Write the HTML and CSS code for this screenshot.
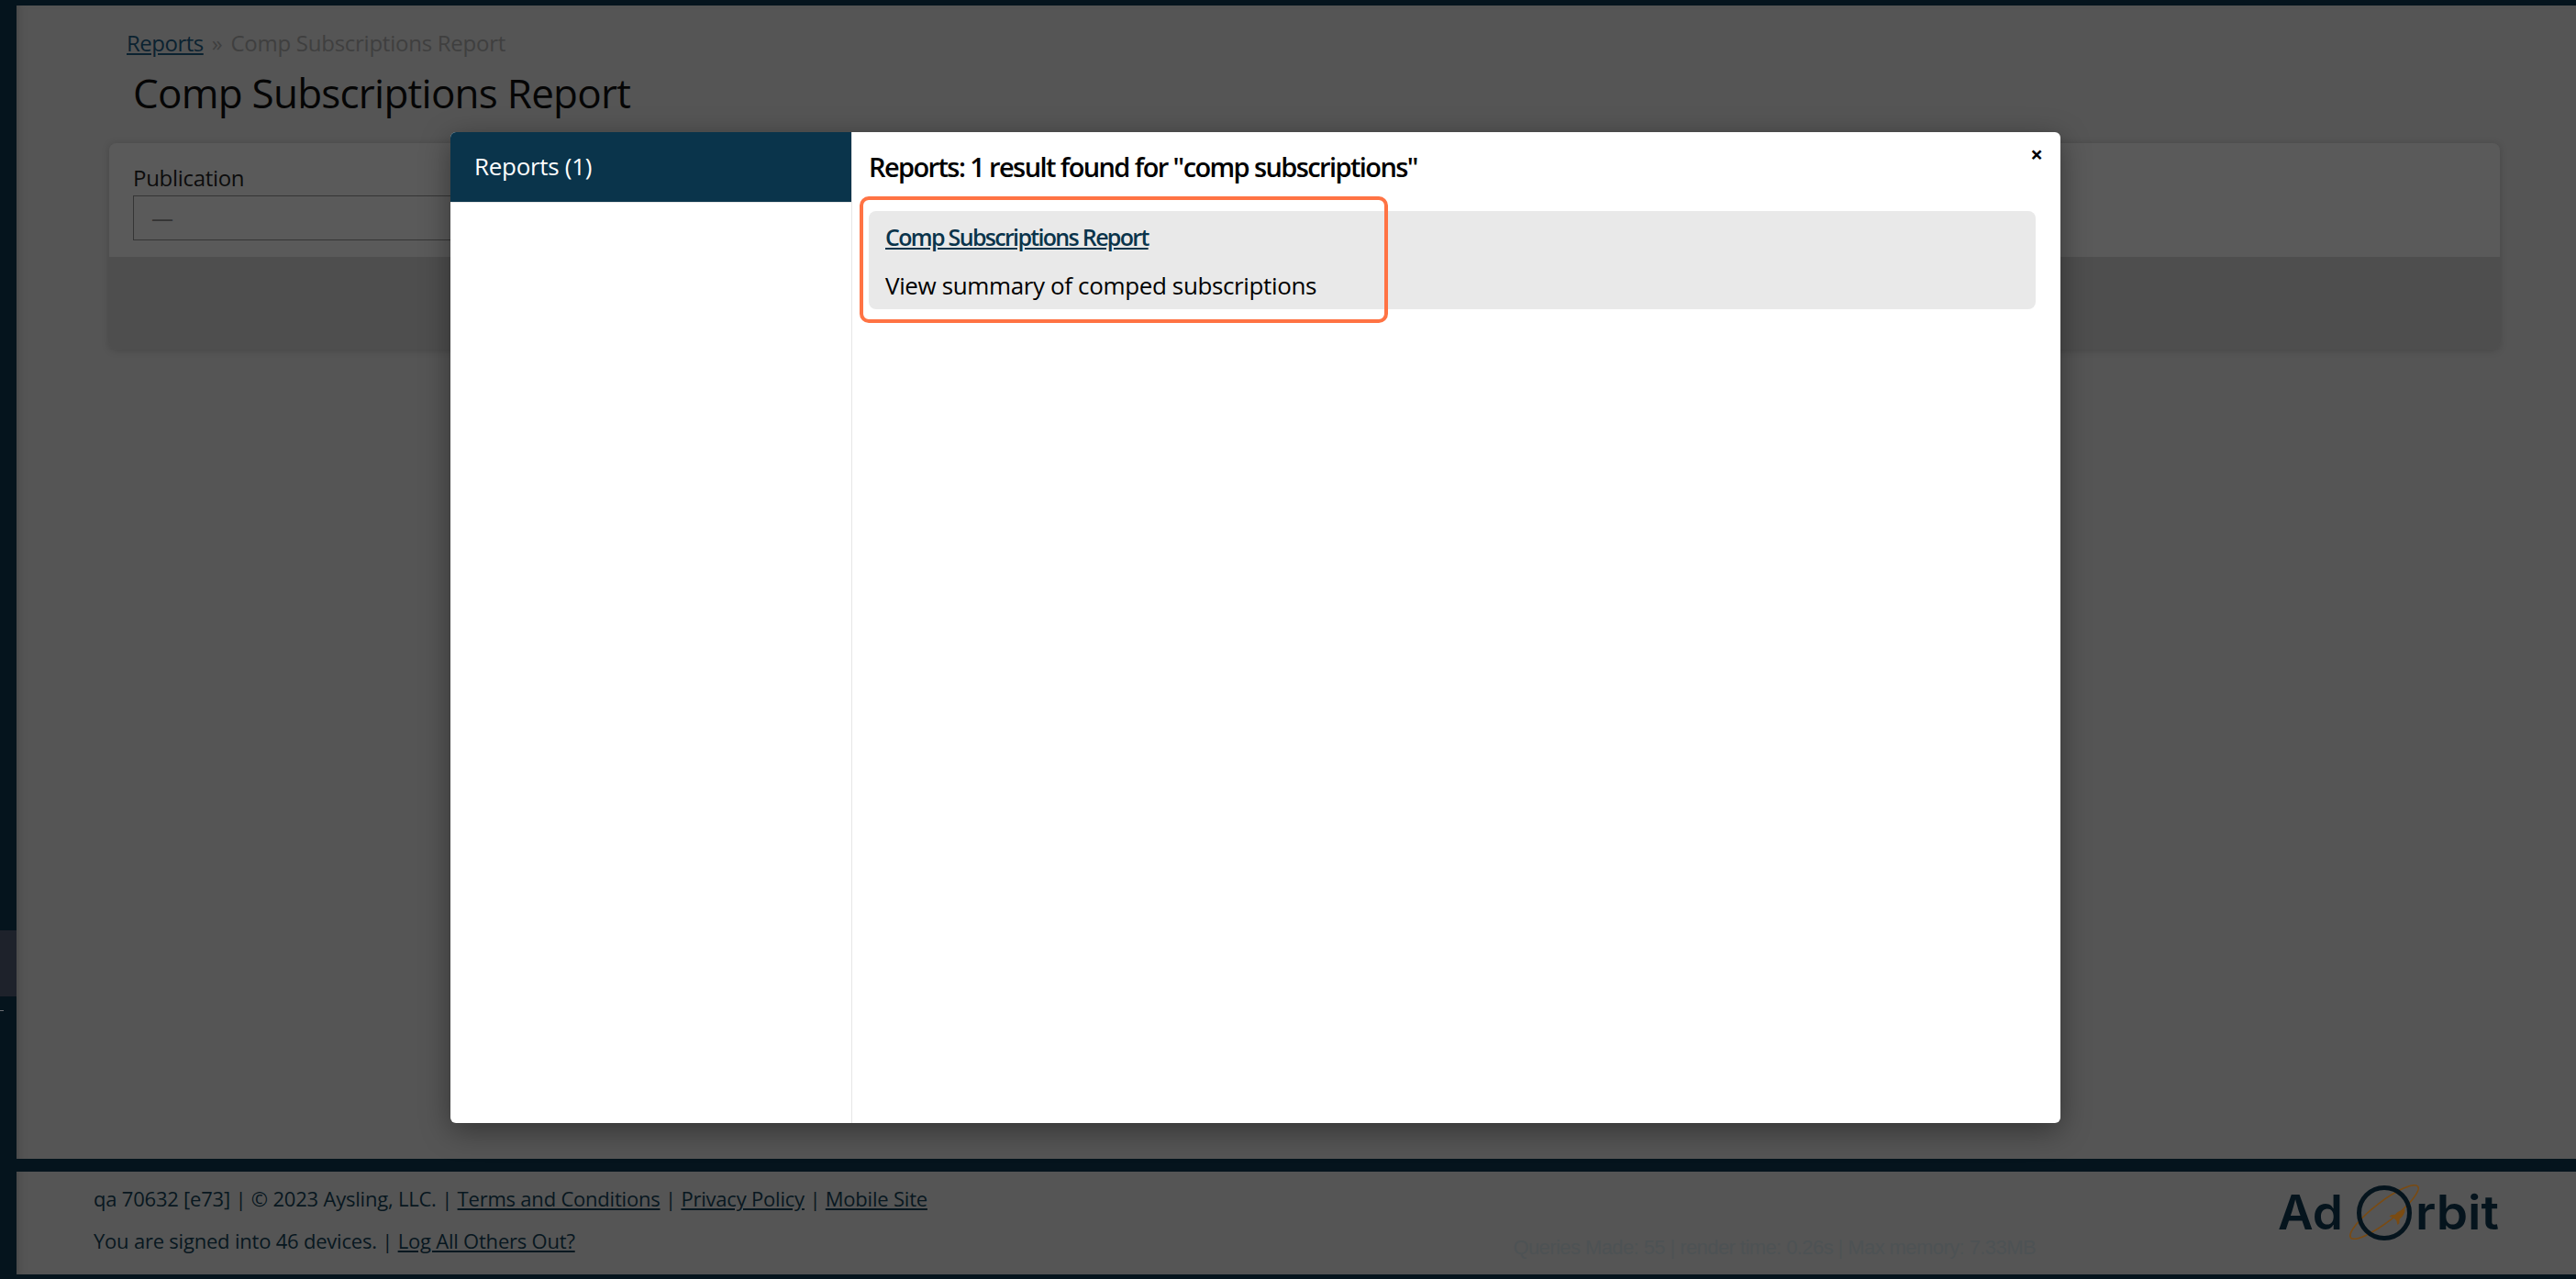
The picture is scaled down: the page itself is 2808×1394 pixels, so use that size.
FILE: index.html
```html
<!DOCTYPE html>
<html lang="en">
<head>
<meta charset="utf-8">
<title>Comp Subscriptions Report</title>
<link rel="stylesheet" href="styles.css">
</head>
<body>
<div class="app">
  <aside class="rail">
    <div class="rail-active"></div>
    <div class="rail-dash"></div>
  </aside>
  <div class="page">
    <main class="content">
      <nav class="crumbs"><a href="#">Reports</a><span class="crumb-sep">»</span>Comp Subscriptions Report</nav>
      <h1 class="title">Comp Subscriptions Report</h1>
      <section class="card">
        <div class="card-top">
          <label class="field-label">Publication</label>
          <div class="select"><span class="select-dash">—</span></div>
        </div>
        <div class="card-bottom"></div>
      </section>
    </main>
    <footer class="footer">
      <div class="footer-text">
        <p class="footer-line">qa 70632 [e73] | © 2023 Aysling, LLC. | <a href="#">Terms and Conditions</a> | <a href="#">Privacy Policy</a> | <a href="#">Mobile Site</a></p>
        <p class="footer-line">You are signed into 46 devices. | <a href="#">Log All Others Out?</a></p>
      </div>
      <div class="debug">Queries Made: 55 | render time: 0.26s | Max memory: 7.33MB</div>
      <svg class="logo" width="250" height="70" viewBox="0 0 250 70" role="img" aria-label="Ad Orbit">
        <ellipse cx="119" cy="34" rx="46" ry="11" transform="rotate(-37.4 119 34)" fill="none" stroke="#7a4b12" stroke-width="1.6"/>
        <circle cx="119" cy="35" r="27.500" fill="none" stroke="#05141d" stroke-width="5"/>
        <path d="M141.800 31.600c-4.600.2-8.400 2-10.800 5.200l-4.800.4-1.600 1.800 4.200 1 3.600 3.600 1 4.400 1.900-1.700.4-4.800c3.400-2.400 5.800-6 6.100-9.900z" fill="#7a4b12"/>
        <text class="logo-text" x="3" y="53" textLength="71" lengthAdjust="spacingAndGlyphs">Ad</text>
        <text class="logo-text" x="153" y="53" textLength="91" lengthAdjust="spacingAndGlyphs">rbit</text>
      </svg>
    </footer>
  </div>
</div>

<div class="modal">
  <aside class="modal-side">
    <div class="modal-tab">Reports (1)</div>
  </aside>
  <div class="modal-main">
    <h2 class="modal-heading">Reports: 1 result found for "comp subscriptions"</h2>
    <div class="result">
      <a class="result-link" href="#">Comp Subscriptions Report</a>
      <p class="result-desc">View summary of comped subscriptions</p>
    </div>
  </div>
  <button class="modal-close" type="button">×</button>
  <div class="highlight"></div>
</div>
</body>
</html>
```
FILE: styles.css
```css
* { box-sizing: border-box; }
html, body { margin: 0; height: 100%; }
body {
  background: #05141d;
  font-family: "Open Sans", "Noto Sans", sans-serif;
  overflow: hidden;
}
a { color: inherit; }
p, h1, h2 { margin: 0; font-weight: 400; }

.app {
  display: flex;
  height: 1394px;
  padding: 6px 0 5px;
}
.rail {
  width: 18px;
  flex: none;
  padding-top: 1008px;
}
.rail-active { height: 72px; background: #1e222b; }
.rail-dash { width: 4px; height: 1px; margin-top: 15px; background: #6d7074; }

.page {
  flex: 1;
  display: flex;
  flex-direction: column;
  background: #555;
  box-shadow: inset 8px 0 8px -6px #474747;
}
.content { flex: 1; padding: 22px 83px 0 101px; }
.crumbs { margin-left: 19px; font-size: 24px; line-height: 38px; color: #3f3f3f; letter-spacing: -.25px; }
.crumbs a { color: #0b2230; letter-spacing: -.5px; }
.crumb-sep { margin: 0 9px; }
.title { margin: 5px 0 0 26px; font-size: 44px; line-height: 60px; color: #050505; letter-spacing: -.75px; }
.card {
  margin-top: 25px;
  border-radius: 8px;
  overflow: hidden;
  box-shadow: 0 1px 8px rgba(0, 0, 0, .18);
}
.card-top { height: 124px; padding: 21px 26px 0; background: #5a5a5a; }
.field-label { display: block; font-size: 24px; line-height: 34px; color: #0c0c0c; letter-spacing: -.3px; }
.select { height: 49px; margin-top: 2px; width: 500px; border: 1px solid #353535; padding: 0 19px; line-height: 47px; }
.select-dash { color: #333; font-size: 24px; }
.card-bottom { height: 101px; background: #4e4e4e; }

.footer {
  position: relative;
  height: 126px;
  flex: none;
  border-top: 14px solid #05141d;
  display: flex;
  justify-content: space-between;
  padding: 6px 78px 0 84px;
}
.footer-text { color: #08171f; font-size: 22px; letter-spacing: -.21px; }
.footer-line { line-height: 46px; }
.debug {
  position: absolute;
  right: 589px;
  bottom: 14px;
  color: #4d5254;
  font: 22px/30px "Liberation Sans", Arial, sans-serif;
  letter-spacing: -.58px;
}
.logo { margin-top: 4px; }
.logo-text { font: 600 52px Inter, Lato, sans-serif; fill: #05141d; }

.modal {
  position: absolute;
  left: 491px;
  top: 144px;
  width: 1755px;
  height: 1080px;
  display: flex;
  background: #fff;
  border-radius: 6px;
  box-shadow: 0 8px 32px rgba(0, 0, 0, .4);
}
.modal-side { width: 438px; flex: none; border-right: 1px solid #e6e6e6; }
.modal-tab {
  height: 77px;
  padding-left: 26px;
  background: #0a344b;
  border-top-left-radius: 6px;
  border-bottom: 1px solid #e6e6e6;
  color: #fff;
  font-size: 26px;
  line-height: 74px;
  letter-spacing: -.3px;
}
.modal-main { flex: 1; padding: 18px 27px 0 18px; }
.modal-heading { font-size: 29px; font-weight: 600; line-height: 40px; color: #000; letter-spacing: -1.6px; }
.result {
  height: 107px;
  margin-top: 28px;
  padding: 11px 18px 0;
  background: #e9e9e9;
  border-radius: 8px;
}
.result-link { display: block; font-size: 25px; font-weight: 600; line-height: 34px; color: #0a344b; letter-spacing: -1.68px; }
.result-desc { margin-top: 19px; font-size: 26px; line-height: 34px; color: #000; letter-spacing: -.37px; }
.modal-close {
  position: absolute;
  top: 8px;
  right: 19px;
  padding: 0;
  border: 0;
  background: none;
  color: #000;
  font: 700 24px/32px "Open Sans", sans-serif;
}
.highlight {
  position: absolute;
  left: 446px;
  top: 70px;
  width: 576px;
  height: 138px;
  border: 4px solid #ff7344;
  border-radius: 10px;
}
```
